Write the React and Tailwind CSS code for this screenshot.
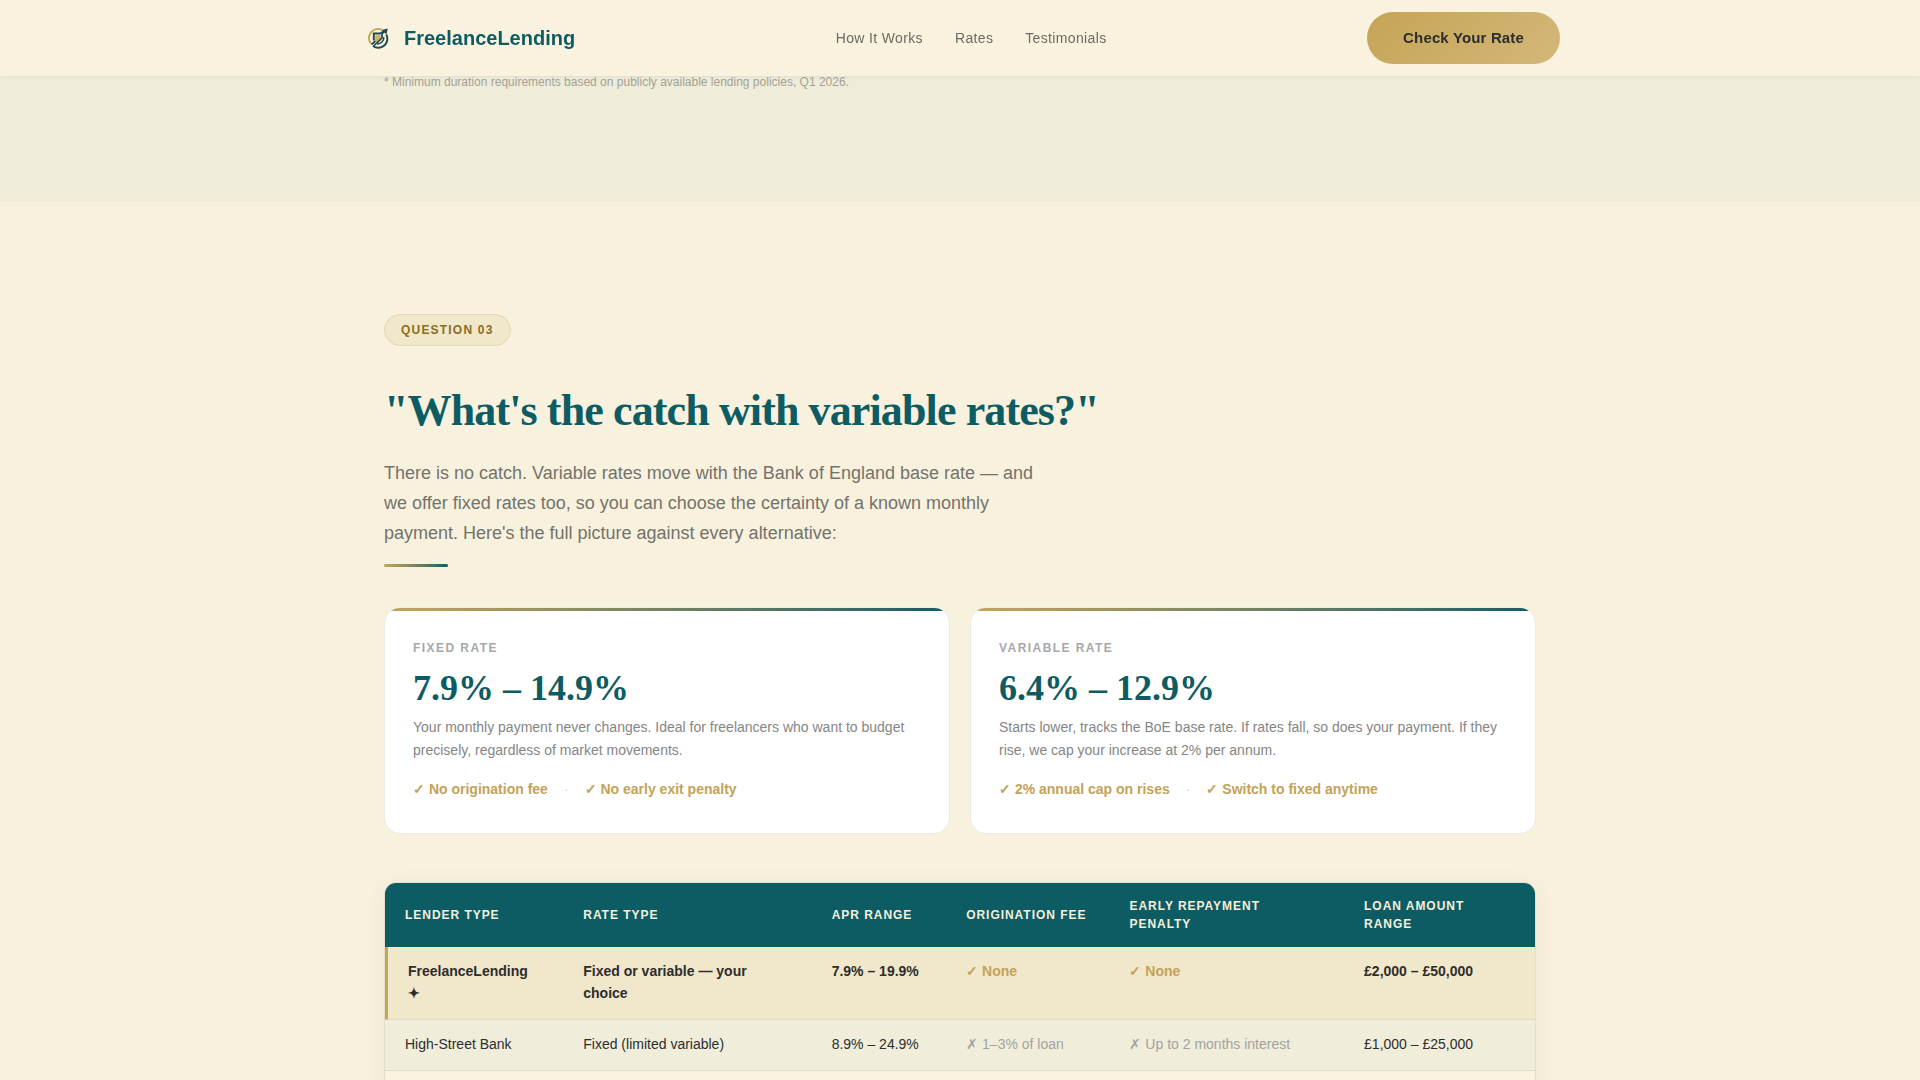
import React from 'react';

const navLinks = ['How It Works', 'Rates', 'Testimonials'];

const rateCards = [
  {
    label: 'Fixed rate',
    range: '7.9% – 14.9%',
    text: 'Your monthly payment never changes. Ideal for freelancers who want to budget precisely, regardless of market movements.',
    perks: ['No origination fee', 'No early exit penalty'],
  },
  {
    label: 'Variable rate',
    range: '6.4% – 12.9%',
    text: 'Starts lower, tracks the BoE base rate. If rates fall, so does your payment. If they rise, we cap your increase at 2% per annum.',
    perks: ['2% annual cap on rises', 'Switch to fixed anytime'],
  },
];

const columns = [
  { title: 'Lender type', width: 'w-[15.5%]' },
  { title: 'Rate type', width: 'w-[21.6%]' },
  { title: 'APR range', width: 'w-[11.7%]' },
  { title: 'Origination fee', width: 'w-[14.2%]' },
  { title: 'Early repayment penalty', width: 'w-[20.4%]' },
  { title: 'Loan amount range', width: 'w-[16.6%]' },
];

const Logo = () => (
  <svg width="36" height="36" viewBox="0 0 36 36" fill="none" aria-hidden="true">
    {/* coin ring */}
    <path d="M10.8 23.5A9 9 0 0 1 22 10" stroke="#c9a55a" strokeWidth="2" />
    <path d="M26.3 14.5A9 9 0 0 1 13 26" stroke="#1b4a54" strokeWidth="2" />
    <path d="M23.8 17A6.400 6.400 0 0 1 17 24" stroke="#1b4a54" strokeWidth="1.4" />
    {/* shield */}
    <path d="M15.2 15.2h5.600v4c0 1.700-1.100 2.800-2.800 3.600-1.700-.8-2.800-1.900-2.800-3.600z" fill="#d4ad62" />
    <path d="M13.8 20.5v-7h6.200l3.500-2" stroke="#1b4a54" strokeWidth="1.9" />
    {/* rising arrow */}
    <path d="M11.5 24.5l4-3.500M13.500 26l8.500-8v-4l3-3.500" stroke="#1b4a54" strokeWidth="1.7" />
    <path d="M21.8 10l6-1.500-1.500 6z" fill="#1b4a54" />
  </svg>
);

const Header = () => (
  <header className="fixed inset-x-0 top-0 z-10 border-b border-[#e6e2cd] bg-[#f9f2df] shadow-[0_1px_4px_rgba(13,92,99,0.05)]">
    <div className="mx-auto flex h-[76px] max-w-[1200px] items-center justify-between">
      <a href="#top" className="flex items-center gap-2 text-xl font-bold text-[#0d5c63]">
        <Logo />
        FreelanceLending
      </a>
      <nav className="flex gap-8 text-sm tracking-wide text-[#6b6b63]">
        {navLinks.map((link) => (
          <a key={link} href="#rates">{link}</a>
        ))}
      </nav>
      <button
        type="button"
        className="h-[52px] rounded-full bg-linear-135 from-[#c5a455] to-[#d4b87a] px-9 text-[15px] font-bold tracking-[0.01em] text-[#2d2d2d]"
      >
        Check Your Rate
      </button>
    </div>
  </header>
);

const RateCard = ({ label, range, text, perks }) => (
  <article className="overflow-hidden rounded-2xl border border-[#ebebe2] bg-white">
    <div className="h-[3px] bg-linear-to-r from-[#c5a55a] to-[#0d5c63]" />
    <div className="px-7 pt-[29px] pb-8">
      <p className="text-xs leading-4 font-bold tracking-[0.12em] text-[#a8a8a8] uppercase">{label}</p>
      <p className="mt-3 font-['Liberation_Serif',serif] text-4xl leading-10 font-bold text-[#0d5c63]">{range}</p>
      <p className="mt-2 text-sm leading-[23px] text-[#858585]">{text}</p>
      <p className="mt-4 flex gap-4 text-sm leading-[23px] font-bold text-[#c4a257]">
        <span>✓ {perks[0]}</span>
        <span className="font-normal text-[#d8d8d8]">·</span>
        <span>✓ {perks[1]}</span>
      </p>
    </div>
  </article>
);

const CompareTable = () => (
  <div className="mt-12 overflow-hidden rounded-xl border border-[#e3dfca] bg-[#faf3e0] pb-8 shadow-[0_4px_24px_rgba(90,70,20,0.06)]">
    <table className="w-full table-fixed border-separate border-spacing-0 text-left text-sm leading-[22px] text-[#2d2d2d]">
      <thead className="bg-[#0d5c63] text-xs leading-[18px] tracking-[0.08em] text-[#f5efdc] uppercase">
        <tr>
          {columns.map(({ title, width }) => (
            <th key={title} scope="col" className={`${width} px-5 py-[14px] font-bold`}>{title}</th>
          ))}
        </tr>
      </thead>
      <tbody className="align-top [&_td]:border-b [&_td]:border-b-[#dfdcc9] [&_td]:px-5 [&_td]:pt-[13px] [&_td]:pb-[15px]">
        <tr className="bg-[#f1e7cb] font-bold">
          <td className="border-l-[3px] border-l-[#c5a55a]">FreelanceLending ✦</td>
          <td>Fixed or variable — your choice</td>
          <td>7.9% – 19.9%</td>
          <td className="text-[#c4a257]">✓ None</td>
          <td className="text-[#c4a257]">✓ None</td>
          <td>£2,000 – £50,000</td>
        </tr>
        <tr className="bg-[#f0eddb]">
          <td>High-Street Bank</td>
          <td>Fixed (limited variable)</td>
          <td>8.9% – 24.9%</td>
          <td className="text-[#a3a3a0]">✗ 1–3% of loan</td>
          <td className="text-[#a3a3a0]">✗ Up to 2 months interest</td>
          <td>£1,000 – £25,000</td>
        </tr>
      </tbody>
    </table>
  </div>
);

const App = () => (
  <div id="top" className="bg-[#f8f1de] font-['Liberation_Sans',Arial,sans-serif]">
    <Header />

    <section className="bg-[#f0ecda] pt-[72px] pb-[110px]">
      <div className="mx-auto max-w-[1200px] px-6">
        <p className="text-xs leading-5 text-[#a3a393]">
          * Minimum duration requirements based on publicly available lending policies, Q1 2026.
        </p>
      </div>
    </section>

    <section id="rates" className="pt-28">
      <div className="mx-auto max-w-[1200px] px-6">
        <span className="inline-flex h-8 items-center rounded-full border border-[#e4d8b0] bg-[#f1e8cb] px-4 text-xs font-bold tracking-[0.1em] text-[#8b6d1f] uppercase">
          Question 03
        </span>
        <h2 className="mt-10 font-['Liberation_Serif',serif] text-[44px] leading-[50px] font-bold tracking-[-0.02em] text-[#0d5c63]">
          "What's the catch with variable rates?"
        </h2>
        <p className="mt-[22px] max-w-[660px] text-lg leading-[30px] text-[#73736b]">
          There is no catch. Variable rates move with the Bank of England base rate — and we offer fixed rates too, so
          you can choose the certainty of a known monthly payment. Here's the full picture against every alternative:
        </p>
        <div className="mt-4 h-[3px] w-16 rounded-sm bg-linear-to-r from-[#c5a55a] to-[#0d5c63]" />

        <div className="mt-10 grid grid-cols-2 gap-5">
          {rateCards.map((card) => (
            <RateCard key={card.label} {...card} />
          ))}
        </div>

        <CompareTable />
      </div>
    </section>
  </div>
);

export default App;
